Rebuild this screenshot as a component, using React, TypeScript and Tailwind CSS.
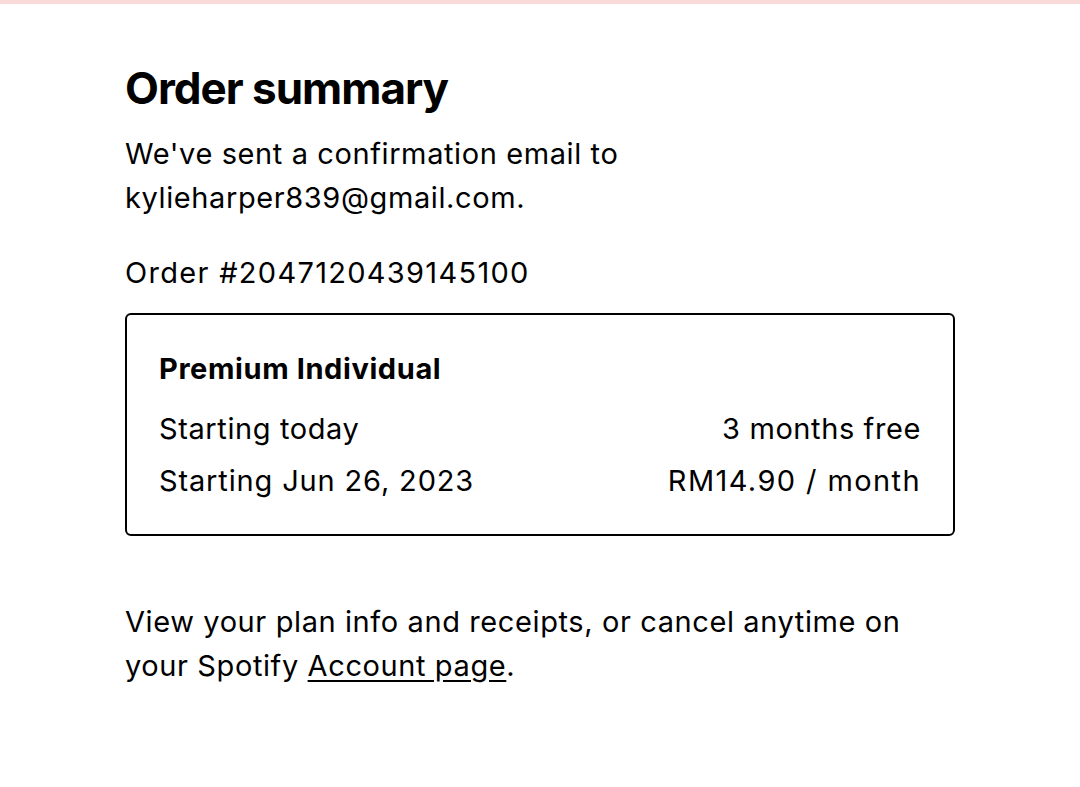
export default function App() {
  return (
    <div className="min-h-screen bg-white text-black font-['Inter',sans-serif]">
      <div className="h-[4px] bg-[#fbdada]" />
      <main className="pl-[125px] pr-[125px] pt-[58px]">
        <h1 className="text-[44px] leading-[52px] font-bold tracking-[-1px]">Order summary</h1>
        <div className="text-[29px] tracking-[0.6px]">
          <p className="mt-[18px] leading-[44px] max-w-[540px]">
            We've sent a confirmation email to kylieharper839@gmail.com.
          </p>
          <p className="mt-[31px] leading-[44px] tracking-[1.3px]">Order #2047120439145100</p>

          <section className="mt-[18px] border-2 border-black rounded-[6px] px-[32px] pt-[30px] pb-[27px]">
            <h2 className="font-bold leading-[48px]">Premium Individual</h2>
            <div className="mt-[10px] flex justify-between leading-[52px]">
              <span>Starting today</span>
              <span>3 months free</span>
            </div>
            <div className="flex justify-between leading-[52px]">
              <span className="tracking-[0.85px]">Starting Jun 26, 2023</span>
              <span className="tracking-[1.4px]">RM14.90 / month</span>
            </div>
          </section>

          <p className="mt-[64px] leading-[44px]">
            View your plan info and receipts, or cancel anytime on
            <br />
            your Spotify{" "}
            <a href="#" className="underline underline-offset-4">
              Account page
            </a>
            .
          </p>
        </div>
      </main>
    </div>
  );
}
